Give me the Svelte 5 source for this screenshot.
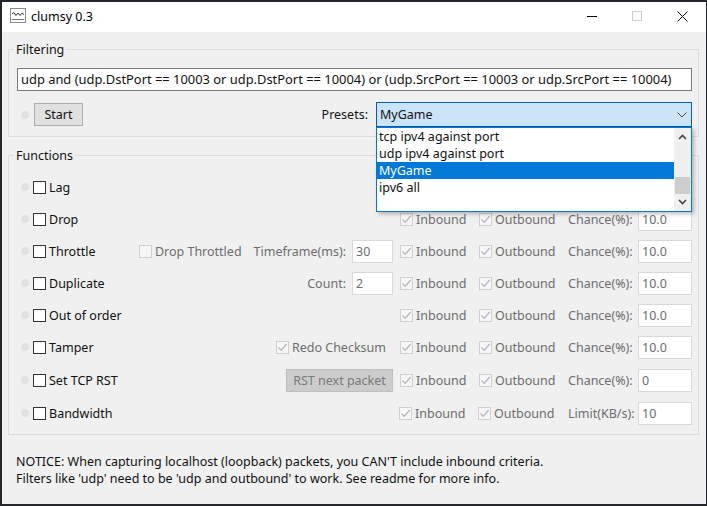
<script>
  const filter = 'udp and (udp.DstPort == 10003 or udp.DstPort == 10004) or (udp.SrcPort == 10003 or udp.SrcPort == 10004)';
  const presets = ['tcp ipv4 against port', 'udp ipv4 against port', 'MyGame', 'ipv6 all'];
  const functions = [
    { name: 'Lag', label: 'Chance(%):', value: '10.0' },
    { name: 'Drop', label: 'Chance(%):', value: '10.0' },
    { name: 'Throttle', label: 'Chance(%):', value: '10.0', extra: 'throttle' },
    { name: 'Duplicate', label: 'Chance(%):', value: '10.0', extra: 'count' },
    { name: 'Out of order', label: 'Chance(%):', value: '10.0' },
    { name: 'Tamper', label: 'Chance(%):', value: '10.0', extra: 'checksum' },
    { name: 'Set TCP RST', label: 'Chance(%):', value: '0', extra: 'rst' },
    { name: 'Bandwidth', label: 'Limit(KB/s):', value: '10', shift: true }
  ];
</script>

{#snippet check(text, checked)}
  <span class="check-wrap">
    <span class="box off">
      {#if checked}
        <svg width="11" height="11" viewBox="0 0 11 11"><path d="M1.5 5.5 L4.2 8.3 L9.6 2" fill="none" stroke="#b4b4b4" stroke-width="1.2" /></svg>
      {/if}
    </span>
    <span class="muted">{text}</span>
  </span>
{/snippet}

<div class="window">
  <header class="titlebar">
    <svg class="app-icon" width="17" height="16" viewBox="0 0 17 16">
      <rect x="0.5" y="0.5" width="15" height="14" fill="#fff" stroke="#8a8a8a" />
      <path d="M2 6 L4 4.5 L6 7.5 L8 5 L10 7.5 L12 5 L14 6.5" fill="none" stroke="#333" />
      <path d="M2 11.5 H14" stroke="#777" />
    </svg>
    <span class="title">clumsy 0.3</span>
    <div class="controls">
      <svg width="10" height="10" viewBox="0 0 10 10"><path d="M0 5.5 H10" stroke="#000" /></svg>
      <svg width="10" height="10" viewBox="0 0 10 10"><rect x="0.5" y="0.5" width="9" height="9" fill="none" stroke="#ccc" /></svg>
      <svg width="11" height="11" viewBox="0 0 11 11"><path d="M0.5 0.5 L10.5 10.5 M10.5 0.5 L0.5 10.5" stroke="#111" /></svg>
    </div>
  </header>

  <main class="content">
    <fieldset class="group filtering">
      <legend>Filtering</legend>
      <div class="filter-input">{filter}</div>
      <div class="start-row">
        <span class="led"></span>
        <button class="start">Start</button>
        <span class="presets-label">Presets:</span>
        <div class="combo">
          <span>MyGame</span>
          <svg width="10" height="6" viewBox="0 0 10 6"><path d="M0.5 0.5 L5 5 L9.5 0.5" fill="none" stroke="#444" /></svg>
          <div class="dropdown">
            <ul>
              {#each presets as preset}
                <li class:selected={preset === 'MyGame'}>{preset}</li>
              {/each}
            </ul>
            <div class="scrollbar">
              <svg width="9" height="6" viewBox="0 0 9 6"><path d="M1 5 L4.5 1.5 L8 5" fill="none" stroke="#444" stroke-width="1.6" /></svg>
              <span class="thumb"></span>
              <svg width="9" height="6" viewBox="0 0 9 6"><path d="M1 1 L4.5 4.5 L8 1" fill="none" stroke="#444" stroke-width="1.6" /></svg>
            </div>
          </div>
        </div>
      </div>
    </fieldset>

    <fieldset class="group functions">
      <legend>Functions</legend>
      {#each functions as fn}
        <div class="row" class:shift={fn.shift}>
          <span class="led"></span>
          <span class="box on"></span>
          <span class="name">{fn.name}</span>
          <div class="extras">
            {#if fn.extra === 'throttle'}
              <span class="drop-throttled">{@render check('Drop Throttled', false)}</span>
              <span class="muted">Timeframe(ms):</span>
              <span class="field small">30</span>
            {:else if fn.extra === 'count'}
              <span class="muted">Count:</span>
              <span class="field small">2</span>
            {:else if fn.extra === 'checksum'}
              <span class="checksum">{@render check('Redo Checksum', true)}</span>
            {:else if fn.extra === 'rst'}
              <button class="rst">RST next packet</button>
            {/if}
          </div>
          <span class="inbound">{@render check('Inbound', true)}</span>
          <span class="outbound">{@render check('Outbound', true)}</span>
          <span class="muted param">{fn.label}</span>
          <span class="field">{fn.value}</span>
        </div>
      {/each}
    </fieldset>

    <p class="notice">
      NOTICE: When capturing localhost (loopback) packets, you CAN'T include inbound criteria.<br />
      Filters like 'udp' need to be 'udp and outbound' to work. See readme for more info.
    </p>
  </main>
</div>

<style>
  :global(body) {
    margin: 0;
    background: #23262a;
  }

  .window {
    box-sizing: border-box;
    width: 704px;
    height: 502px;
    margin: 2px 0 0 2px;
    display: flex;
    flex-direction: column;
    background: #f0f0f0;
    color: #111;
    font-family: "Noto Sans", "Noto Sans CJK SC", sans-serif;
    font-size: 12.5px;
    line-height: 17px;
  }

  .titlebar {
    box-sizing: border-box;
    height: 30px;
    flex: none;
    display: flex;
    align-items: center;
    background: #fff;
    padding: 0 0 2px 8px;
  }

  .app-icon {
    margin-right: 4px;
  }

  .title {
    color: #000;
  }

  .controls {
    margin-left: auto;
    display: flex;
    align-items: center;
    gap: 35px;
    padding-right: 18px;
  }

  .content {
    flex: 1;
    padding: 9px 7px 0 6px;
    display: flex;
    flex-direction: column;
  }

  .group {
    margin: 0;
    padding: 0;
    border: 1px solid #dcdcdc;
    min-width: 0;
    position: relative;
  }

  legend {
    margin-left: -3px;
    padding: 0 2px;
    line-height: 17px;
  }

  .filtering {
    height: 96px;
    box-sizing: border-box;
    padding: 10px 6px 0 8px;
  }

  .filter-input {
    box-sizing: border-box;
    height: 23px;
    border: 1px solid #7a7a7a;
    background: #fff;
    padding: 2px 3px;
    white-space: nowrap;
    overflow: hidden;
    font-size: 12.9px;
  }

  .start-row {
    display: flex;
    align-items: center;
    margin-top: 11px;
    height: 25px;
  }

  .led {
    flex: none;
    width: 8px;
    height: 8px;
    border-radius: 50%;
    background: #e1e1e1;
    margin-left: 4px;
  }

  .start {
    margin-left: 5px;
    width: 49px;
    height: 23px;
    border: 1px solid #adadad;
    background: #e1e1e1;
    font: inherit;
    color: #111;
    padding: 0;
  }

  .presets-label {
    margin-left: auto;
    margin-right: 8px;
  }

  .combo {
    position: relative;
    box-sizing: border-box;
    width: 316px;
    height: 25px;
    border: 1px solid #005fb0;
    background: #cce4f7;
    display: flex;
    align-items: center;
    justify-content: space-between;
    padding: 0 4px 0 3px;
  }

  .dropdown {
    position: absolute;
    z-index: 2;
    left: -1px;
    top: 24px;
    box-sizing: border-box;
    width: 316px;
    height: 85px;
    border: 1px solid #0078d7;
    background: #fff;
    box-shadow: 2px 2px 4px rgba(0, 0, 0, 0.25);
    display: flex;
  }

  ul {
    list-style: none;
    margin: 0;
    padding: 0;
    flex: 1;
  }

  li {
    height: 17px;
    padding-left: 2px;
    line-height: 17px;
  }

  li.selected {
    background: #0078d7;
    color: #fff;
  }

  .scrollbar {
    position: relative;
    width: 17px;
    background: #f0f0f0;
    display: flex;
    flex-direction: column;
    align-items: center;
    justify-content: space-between;
    padding: 6px 0;
    box-sizing: border-box;
  }

  .thumb {
    position: absolute;
    left: 1px;
    right: 1px;
    top: 49px;
    height: 17px;
    background: #cdcdcd;
  }

  .functions {
    margin-top: 10px;
    height: 288px;
    box-sizing: border-box;
    padding: 7px 6px 0 8px;
    display: flex;
    flex-direction: column;
  }

  .row {
    display: flex;
    align-items: center;
    height: 32px;
    flex: none;
  }

  .row:nth-of-type(n + 7) {
    margin-top: 1px;
  }

  .box {
    flex: none;
    box-sizing: border-box;
    width: 13px;
    height: 13px;
    display: inline-flex;
    align-items: center;
    justify-content: center;
    background: #fff;
  }

  .box.on {
    border: 1px solid #333;
    margin-left: 4px;
  }

  .box.off {
    border: 1px solid #cfcfcf;
    background: #f6f6f6;
  }

  .name {
    margin-left: 3px;
  }

  .extras {
    flex: 1;
    display: flex;
    justify-content: flex-end;
    align-items: center;
    gap: 6px;
    min-width: 0;
    padding-right: 7px;
  }

  .check-wrap {
    display: flex;
    align-items: center;
    gap: 3px;
    white-space: nowrap;
  }

  .muted {
    color: #6d6d6d;
    white-space: nowrap;
  }

  .drop-throttled {
    margin-right: 6px;
  }

  .checksum {
    margin-right: 7px;
  }

  .inbound {
    width: 79px;
    flex: none;
  }

  .outbound {
    width: 89px;
    flex: none;
  }

  .shift .inbound {
    margin-left: -1px;
  }

  .shift .outbound {
    margin-right: 1px;
  }

  .param {
    width: 64px;
    flex: none;
    margin-right: 6px;
    text-align: right;
  }

  .field {
    flex: none;
    box-sizing: border-box;
    width: 54px;
    height: 23px;
    border: 1px solid #d9d9d9;
    background: #fff;
    color: #6d6d6d;
    padding: 2px 3px;
  }

  .field.small {
    width: 41px;
  }

  .rst {
    width: 107px;
    height: 23px;
    border: 1px solid #bfbfbf;
    background: #cccccc;
    color: #7a7a7a;
    font: inherit;
    padding: 0;
  }

  .notice {
    margin: 18px 0 0 8px;
  }
</style>
